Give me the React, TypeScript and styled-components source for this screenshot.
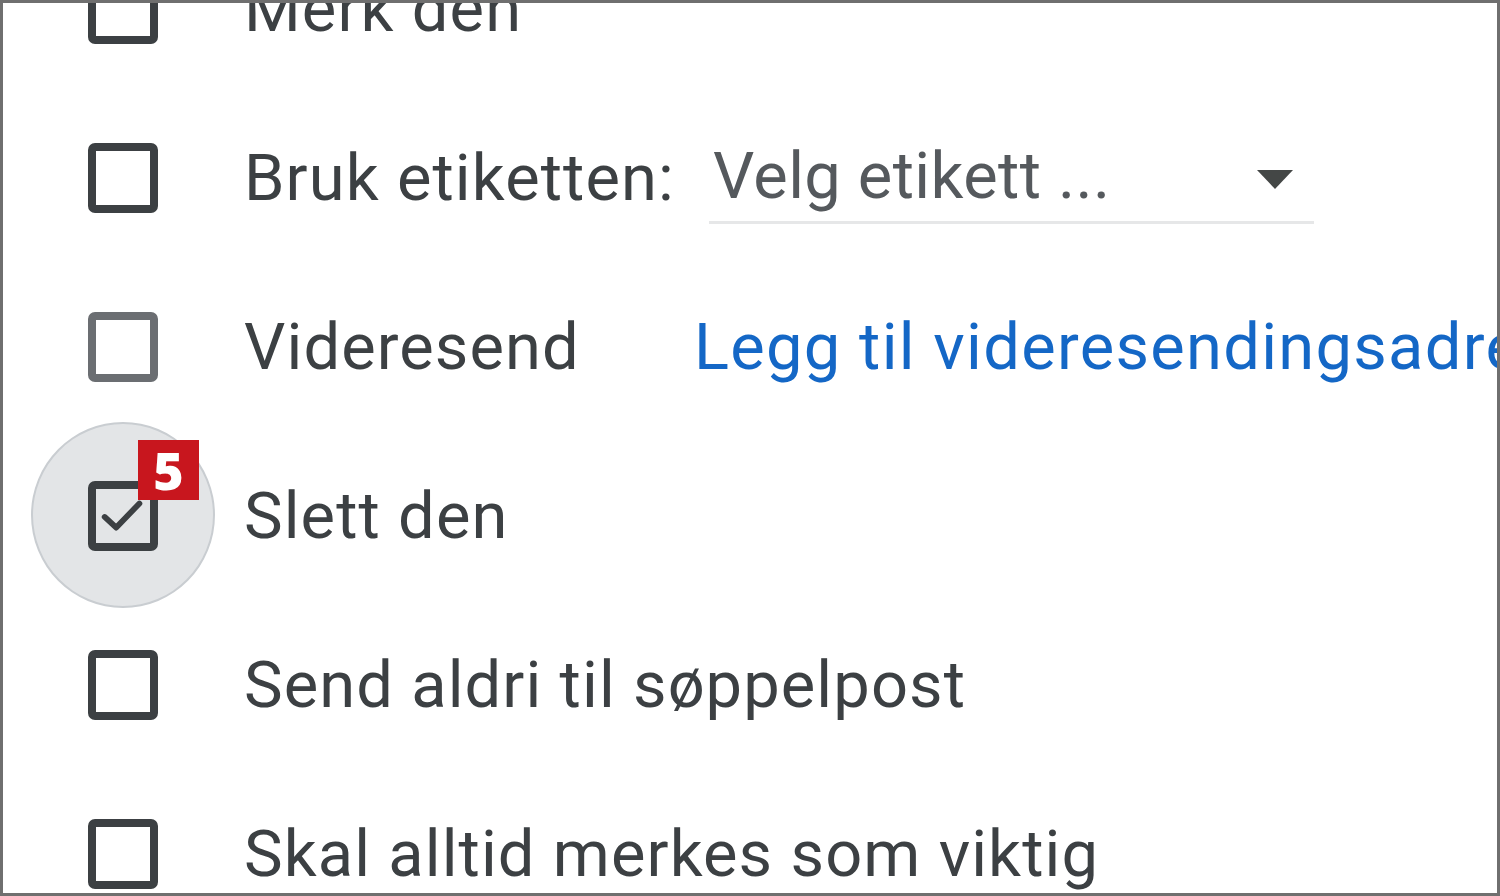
import React, { FC } from 'react';
import styled, { createGlobalStyle } from 'styled-components';

const GlobalStyle = createGlobalStyle`
    html, body{
        margin: 0;
        padding: 0;
        background: #ffffff;
    }
    body{
        font-family: Roboto, "Liberation Sans", Arial, sans-serif;
    }
`;

interface IOption {
    label: string;
    checked?: boolean;
    faded?: boolean;
    marker?: string;
    labelWidth?: number;
    extra?: 'dropdown' | 'link';
}

const options: IOption[] = [
    { label: 'Merk den' },
    { label: 'Bruk etiketten:', extra: 'dropdown' },
    { label: 'Videresend', faded: true, labelWidth: 450, extra: 'link' },
    { label: 'Slett den', checked: true, marker: '5' },
    { label: 'Send aldri til søppelpost' },
    { label: 'Skal alltid merkes som viktig' },
];

const Checkbox: FC<{ checked?: boolean; faded?: boolean; marker?: string }> = ({ checked, faded, marker }) => (
    <BoxCell>
        {checked ? <Ripple /> : null}
        <Box $faded={faded}>
            {checked ? (
                <svg width="56" height="56" viewBox="0 0 56 56">
                    <path d="M9 29 L21 40 L45 15" fill="none" stroke="#3c4043" strokeWidth="6" strokeLinecap="round" strokeLinejoin="round" />
                </svg>
            ) : null}
        </Box>
        {marker ? <Marker>{marker}</Marker> : null}
    </BoxCell>
);

const App: FC = () => {
    return (
        <>
            <GlobalStyle />
            <Frame>
                <OptionList>
                    {options.map((option) => (
                        <Row key={option.label}>
                            <Checkbox checked={option.checked} faded={option.faded} marker={option.marker} />
                            <Label $minWidth={option.labelWidth}>{option.label}</Label>
                            {option.extra === 'dropdown' ? (
                                <Select>
                                    <span>Velg etikett ...</span>
                                    <svg width="38" height="22" viewBox="0 0 38 22">
                                        <polygon points="1,2 37,2 19,21" fill="#444746" />
                                    </svg>
                                </Select>
                            ) : null}
                            {option.extra === 'link' ? <Link href="#">Legg til videresendingsadresse</Link> : null}
                        </Row>
                    ))}
                </OptionList>
            </Frame>
        </>
    );
};

const Frame = styled.div`
    box-sizing: border-box;
    width: 1500px;
    height: 896px;
    border: 3px solid #6f6f6f;
    overflow: hidden;
    background: #ffffff;
`;

const OptionList = styled.div`
    display: grid;
    grid-auto-rows: 169px;
    margin-top: -79px;
    padding-left: 85px;
`;

const Row = styled.div`
    display: flex;
    align-items: center;
    white-space: nowrap;
`;

const BoxCell = styled.div`
    position: relative;
    width: 70px;
    height: 70px;
    flex: none;
    margin-right: 86px;
`;

const Ripple = styled.div`
    position: absolute;
    left: -57px;
    top: -59px;
    width: 184px;
    height: 186px;
    border-radius: 50%;
    background: #e3e5e7;
    border: 2px solid #c9cdd1;
    box-sizing: border-box;
`;

const Box = styled.div<{ $faded?: boolean }>`
    position: relative;
    box-sizing: border-box;
    width: 70px;
    height: 70px;
    border: 8px solid ${({ $faded }) => ($faded ? '#6b6e72' : '#3c4043')};
    border-radius: 7px;
    display: flex;
    align-items: center;
    justify-content: center;
`;

const Marker = styled.div`
    position: absolute;
    left: 50px;
    top: -41px;
    width: 61px;
    height: 60px;
    background: #c8161e;
    color: #ffffff;
    font-family: "Open Sans", Roboto, sans-serif;
    font-weight: 800;
    font-size: 52px;
    line-height: 60px;
    text-align: center;
`;

const Label = styled.span<{ $minWidth?: number }>`
    font-size: 65px;
    color: #3c4043;
    min-width: ${({ $minWidth }) => ($minWidth ? `${$minWidth}px` : 'auto')};
    letter-spacing: 1.1px;
`;

const Select = styled.div`
    margin-left: 34px;
    width: 605px;
    height: 93px;
    box-sizing: border-box;
    display: flex;
    align-items: center;
    justify-content: space-between;
    padding: 0 20px 0 4px;
    border-bottom: 3px solid #e6e7e8;
    span{
        font-size: 65px;
        color: #55595d;
        letter-spacing: 0.4px;
    }
    svg{
        margin-top: 6px;
    }
`;

const Link = styled.a`
    font-size: 65px;
    color: #1467c6;
    text-decoration: none;
    letter-spacing: 1.3px;
`;

export default App;
